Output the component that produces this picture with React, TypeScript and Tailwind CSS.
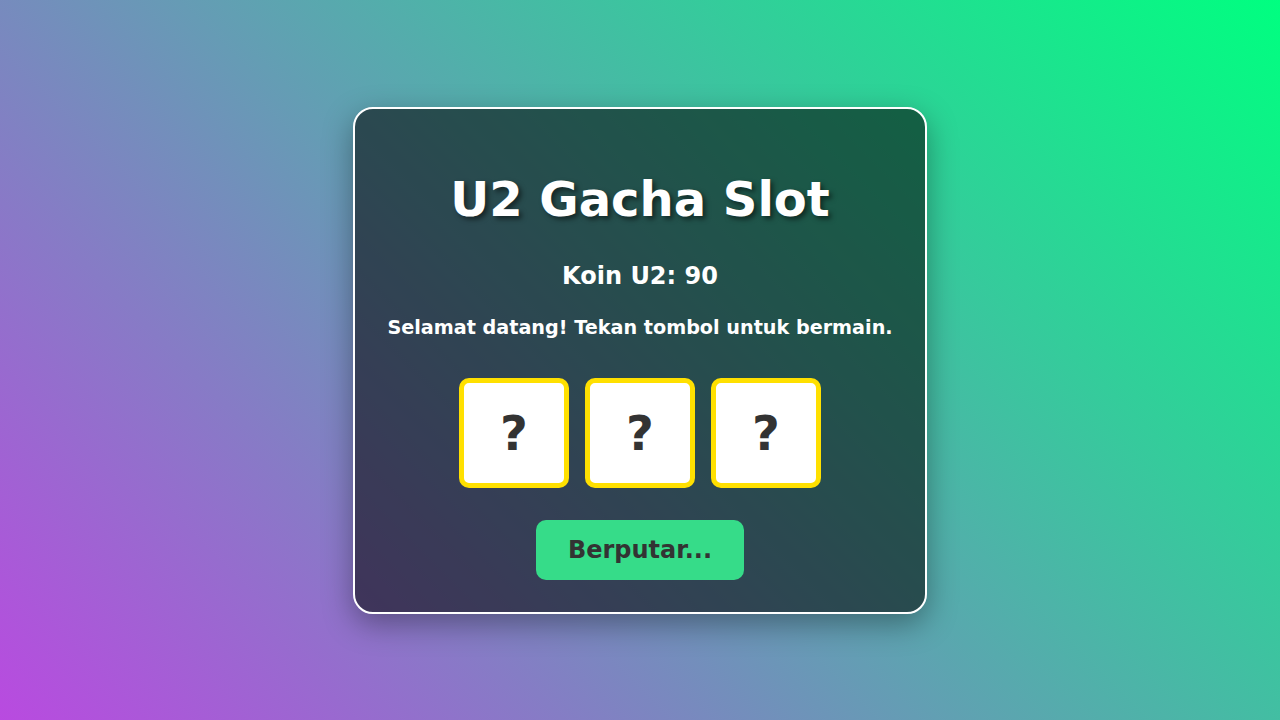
import { useState } from 'react'

const symbols = ['?', '?', '?']

export default function App() {
  const [coins] = useState(90)

  return (
    <div
      className="min-h-screen w-full flex items-center justify-center bg-[linear-gradient(45deg,#b94ae0,#00ff80)]"
      style={{ fontFamily: "'DejaVu Sans', sans-serif" }}
    >
      <div className="w-[574px] rounded-[20px] border-2 border-white bg-black/55 px-[32px] pt-[30px] pb-[32px] text-center text-white shadow-[0_10px_30px_rgba(0,0,0,0.35)]">
        <h1 className="mt-[32px] mb-[35px] text-[48px] leading-[56px] font-bold [text-shadow:3px_3px_5px_rgba(0,0,0,0.5)]">
          U2 Gacha Slot
        </h1>
        <p className="mb-[27px] text-[24px] leading-[28px] font-bold">Koin U2: {coins}</p>
        <p className="mb-[39px] text-[19.2px] leading-[22px] font-bold">
          Selamat datang! Tekan tombol untuk bermain.
        </p>

        {/* slot reels */}
        <div className="flex justify-center gap-4 mb-[32px]">
          {symbols.map((s, i) => (
            <div
              key={i}
              className="w-[110px] h-[110px] rounded-[10px] border-[5px] border-[#ffe000] bg-white flex items-center justify-center text-[48px] leading-none font-bold text-[#333]"
            >
              {s}
            </div>
          ))}
        </div>

        <button className="h-[60px] px-[32px] rounded-[10px] bg-[#36dc89] text-[#333] text-[24px] leading-[28px] font-bold">
          Berputar...
        </button>
      </div>
    </div>
  )
}
